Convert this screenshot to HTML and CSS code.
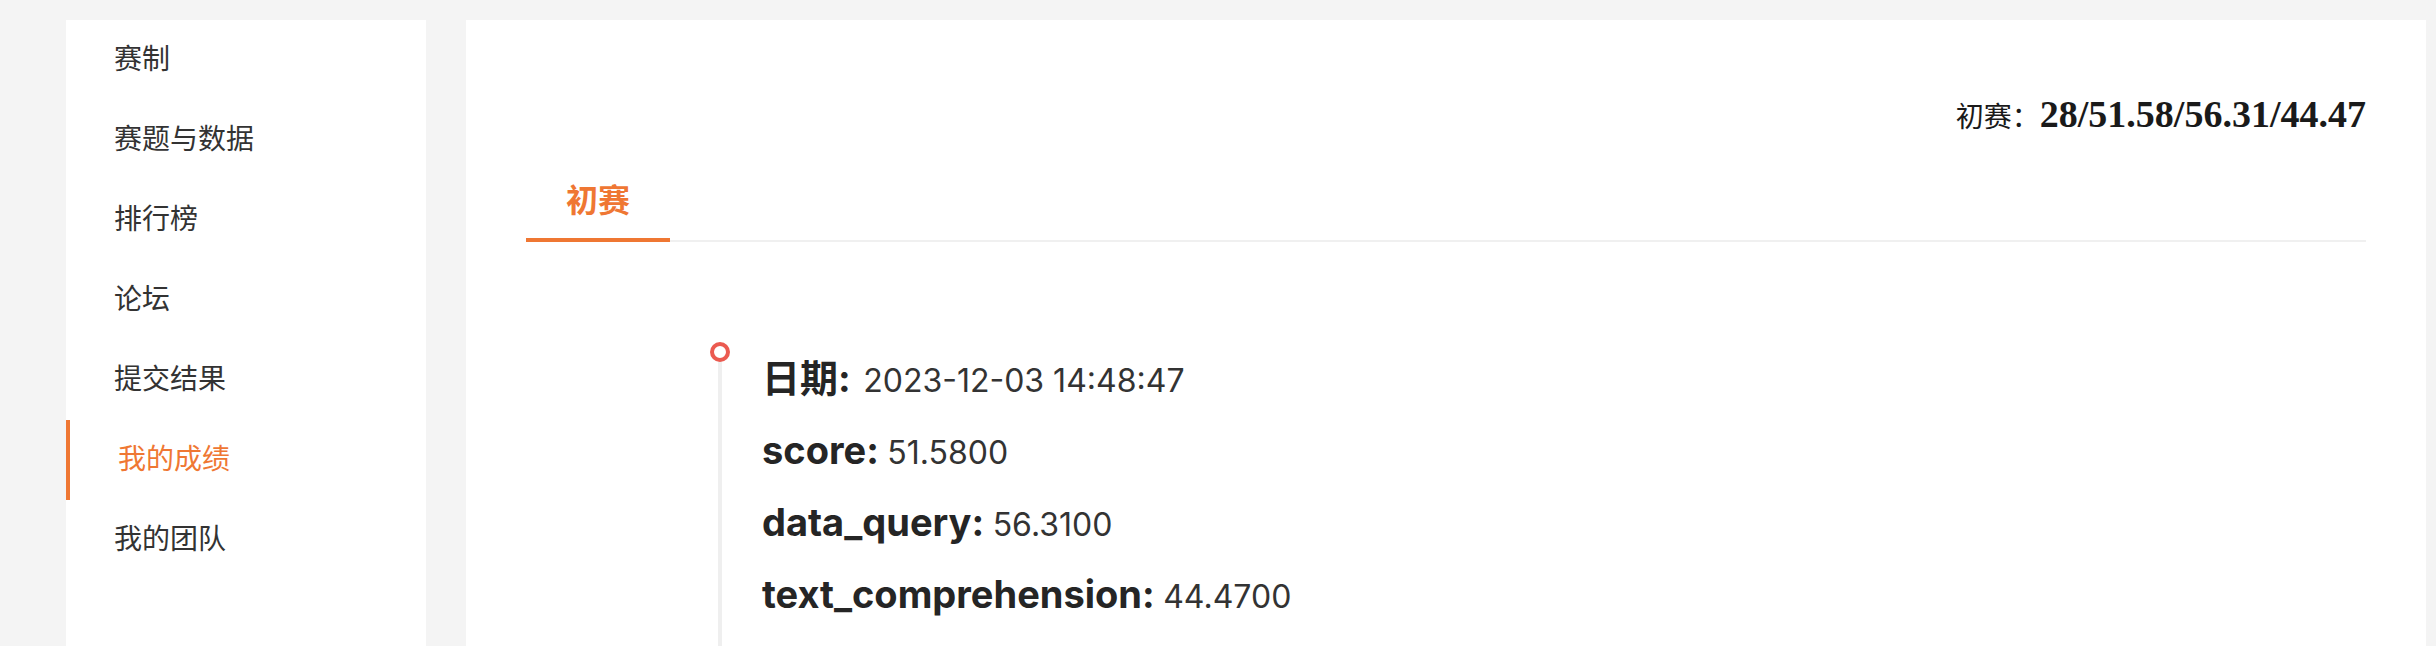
FILE: index.html
```html
<!DOCTYPE html>
<html lang="zh-CN">
<head>
<meta charset="utf-8">
<title>我的成绩</title>
<link rel="stylesheet" href="styles.css">
</head>
<body>
<div class="page">
  <aside class="sidebar">
    <ul class="menu">
      <li class="menu-item">赛制</li>
      <li class="menu-item">赛题与数据</li>
      <li class="menu-item">排行榜</li>
      <li class="menu-item">论坛</li>
      <li class="menu-item">提交结果</li>
      <li class="menu-item active">我的成绩</li>
      <li class="menu-item">我的团队</li>
    </ul>
  </aside>
  <main class="panel">
    <div class="summary"><span class="summary-label">初赛：</span><span class="summary-value">28/51.58/56.31/44.47</span></div>
    <div class="tabs">
      <div class="tab active">初赛</div>
    </div>
    <ul class="timeline">
      <li class="timeline-item">
        <span class="timeline-tail"></span>
        <span class="timeline-dot"></span>
        <div class="timeline-content">
          <p class="row"><span class="key key-cjk">日期:</span> <span class="val">2023-12-03 14:48:47</span></p>
          <p class="row"><span class="key">score:</span> <span class="val">51.5800</span></p>
          <p class="row"><span class="key">data_query:</span> <span class="val">56.3100</span></p>
          <p class="row"><span class="key">text_comprehension:</span> <span class="val">44.4700</span></p>
        </div>
      </li>
    </ul>
  </main>
</div>
</body>
</html>
```

FILE: styles.css
```css
html, body {
  margin: 0;
  padding: 0;
}
body {
  background: #f4f4f4;
  width: 2436px;
  height: 646px;
  overflow: hidden;
  font-family: Inter, "Noto Sans CJK SC", sans-serif;
  color: #303133;
}
ul, p {
  margin: 0;
  padding: 0;
  list-style: none;
}
.page {
  display: flex;
  gap: 40px;
  padding: 20px 10px 0 66px;
  box-sizing: border-box;
  width: 2436px;
}
.sidebar {
  width: 360px;
  flex: none;
  background: #fff;
  height: 700px;
}
.menu-item {
  height: 80px;
  line-height: 80px;
  padding-left: 48px;
  font-family: "Liberation Serif", "Noto Sans CJK SC", serif;
  font-size: 28px;
  color: #333;
  box-sizing: border-box;
}
.menu-item.active {
  color: #ef7733;
  border-left: 4px solid #ef7733;
}
.panel {
  flex: 1;
  background: #fff;
  height: 700px;
  padding: 74px 60px 0 60px;
  box-sizing: border-box;
}
.summary {
  text-align: right;
  line-height: 40px;
  height: 40px;
  color: #1a1a1a;
}
.summary-label {
  font-family: "Liberation Serif", "Noto Sans CJK SC", serif;
  font-size: 28px;
}
.summary-value {
  font-family: "Liberation Serif", serif;
  font-weight: bold;
  font-size: 38px;
}
.tabs {
  margin-top: 28px;
  display: flex;
  border-bottom: 2px solid #f0f0f0;
  height: 80px;
  box-sizing: border-box;
}
.tab {
  padding: 0 40px;
  height: 80px;
  line-height: 78px;
  font-size: 32px;
  font-weight: bold;
  color: #303133;
  box-sizing: border-box;
  margin-bottom: -2px;
}
.tab.active {
  color: #ef7733;
  border-bottom: 4px solid #ef7733;
}
.timeline {
  margin-top: 112px;
  padding-left: 184px;
}
.timeline-item {
  position: relative;
  padding-left: 52px;
  height: 400px;
}
.timeline-tail {
  position: absolute;
  left: 8px;
  top: 16px;
  bottom: 0;
  width: 4px;
  background: #efefef;
}
.timeline-dot {
  position: absolute;
  left: 0;
  top: 0;
  width: 20px;
  height: 20px;
  border: 4px solid #eb5a50;
  border-radius: 50%;
  background: #fff;
  box-sizing: border-box;
}
.timeline-content {
  margin-top: -12px;
}
.row {
  line-height: 72px;
  height: 72px;
  white-space: nowrap;
}
.key {
  font-size: 38px;
  font-weight: bold;
  color: #252525;
}
.key-cjk {
  margin-right: 4px;
}
.val {
  font-size: 32px;
  color: #333;
  margin-left: 4px;
}
```
